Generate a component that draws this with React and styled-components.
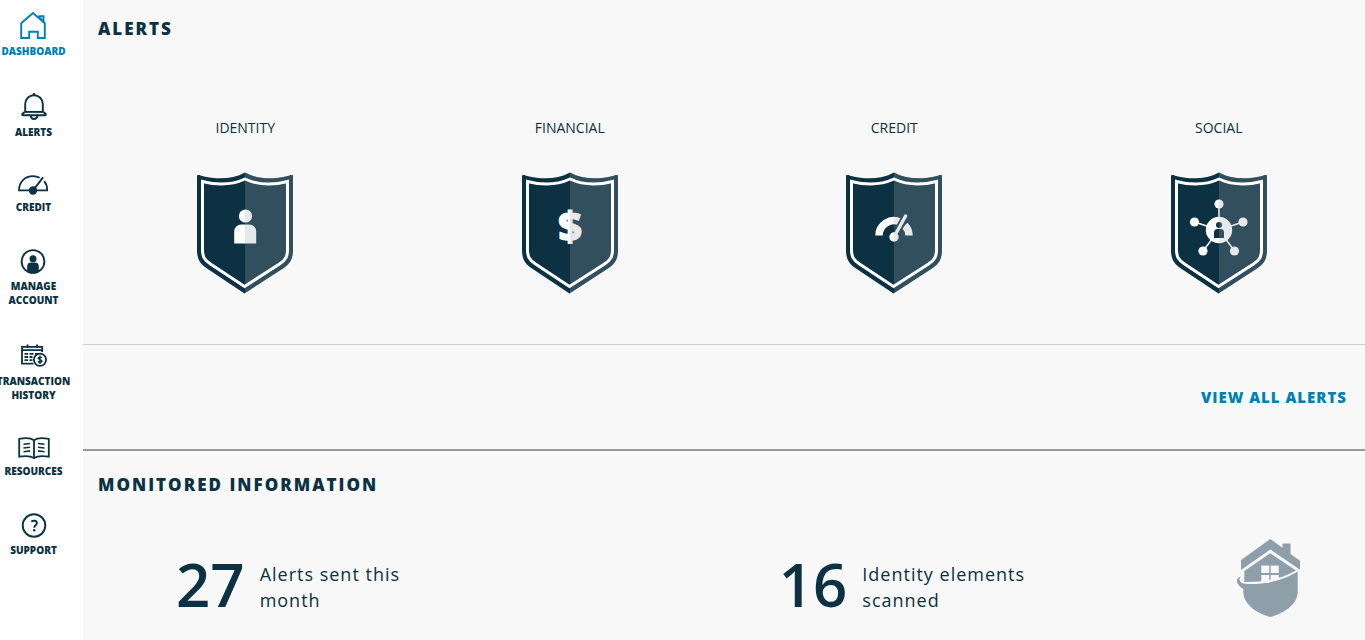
import React from "react";
import styled, { createGlobalStyle, css } from "styled-components";

const navy = "#0b3142";
const blue = "#007fb5";

const GlobalStyle = createGlobalStyle`
  * {
    box-sizing: border-box;
  }

  body {
    margin: 0;
    background-color: #f8f8f8;
    color: ${navy};
    font-family: "Open Sans", sans-serif;
  }
`;

const heavyText = css`
  font-weight: 800;
  text-transform: uppercase;
`;

const Page = styled.div`
  display: flex;
  min-height: 100vh;
  overflow: hidden;
`;

const Sidebar = styled.nav`
  flex: 0 0 83px;
  min-width: 0;
  padding: 11px 16px 0 0;
  background-color: #fff;
`;

const NavList = styled.ul`
  display: flex;
  flex-direction: column;
  gap: 35px;
  margin: 0;
  padding: 0;
  list-style: none;
`;

const NavItem = styled.li`
  display: flex;
  justify-content: center;
`;

const NavLink = styled.a`
  ${heavyText}
  display: flex;
  flex: none;
  flex-direction: column;
  align-items: center;
  gap: 5px;
  width: min-content;
  color: ${(props) => (props.$active ? blue : navy)};
  font-size: 10px;
  line-height: 14px;
  text-align: center;
  text-decoration: none;

  svg {
    display: block;
    flex: none;
  }
`;

const Main = styled.main`
  flex: 1;
  min-width: 0;
`;

const SectionTitle = styled.h2`
  ${heavyText}
  margin: 0;
  padding: 0 15px;
  font-size: 17px;
  line-height: 24px;
  letter-spacing: 2px;
`;

const AlertsSection = styled.section`
  padding-top: 17px;
  border-bottom: 2px solid #999;
`;

const CategoryRow = styled.div`
  display: grid;
  grid-template-columns: repeat(4, 1fr);
  margin-right: -16px;
  padding: 77px 0 50px;
`;

const Category = styled.a`
  display: flex;
  flex-direction: column;
  align-items: center;
  gap: 34px;
  color: ${navy};
  font-size: 14px;
  line-height: 20px;
  text-decoration: none;
  text-transform: uppercase;
`;

const AlertsFooter = styled.div`
  display: flex;
  align-items: center;
  justify-content: flex-end;
  height: 105px;
  padding-right: 18px;
  border-top: 1px solid #c9cfd1;
`;

const ViewAll = styled.a`
  ${heavyText}
  color: ${blue};
  font-size: 15px;
  line-height: 24px;
  letter-spacing: 1px;
  text-decoration: none;
`;

const MonitoredSection = styled.section`
  padding-top: 22px;
`;

const StatRow = styled.div`
  display: grid;
  grid-template-columns: 15fr 11fr 2fr;
  padding: 42px 64px 0 93px;
`;

const Stat = styled.div`
  display: flex;
  align-items: center;
  gap: 15px;
  padding-top: 18px;
`;

const StatNumber = styled.strong`
  padding-bottom: 6px;
  font-size: 60px;
  font-weight: 600;
  line-height: 54px;
`;

const StatLabel = styled.span`
  width: 170px;
  font-size: 18px;
  line-height: 26px;
  letter-spacing: 1px;
`;

const LogoBox = styled.div`
  justify-self: end;

  svg {
    display: block;
  }
`;

const HomeIcon = () => (
  <svg width="26" height="28" viewBox="0 0 26 28" fill="none" stroke="currentColor" strokeWidth="1.9" aria-hidden="true">
    <path d="M1.200 27V12.200L13 2l11.800 10.300V27h-7v-6.200H9.200V27Z" />
    <path d="M18.500 5.200h5v6" />
    <path d="M18.500 5.200l5 5" strokeWidth="1.200" />
  </svg>
);

const BellIcon = () => (
  <svg width="26" height="27" viewBox="0 0 26 27" fill="none" stroke="currentColor" strokeWidth="1.9" aria-hidden="true">
    <path d="M4.200 18.500V11a8.800 8.800 0 0 1 17.600 0v7.500l2.700 2.200a.9.9 0 0 1-.6 1.600H2.100a.9.9 0 0 1-.6-1.600Z" />
    <path d="M4.200 18.900h17.600" />
    <path d="M9.600 22.600a3.400 3.400 0 0 0 6.800 0" />
    <circle cx="13" cy="1.500" r="1.400" fill="currentColor" stroke="none" />
  </svg>
);

const GaugeIcon = () => (
  <svg width="32" height="21" viewBox="0 0 32 21" fill="none" stroke="currentColor" strokeWidth="1.8" aria-hidden="true">
    <path d="M15 16.300H2C2 8 8 2.200 16 2.200c2.600 0 4.700.6 6.700 1.600" />
    <path d="M27.200 7.200c2 2.400 3 5.400 3 9.100H17" />
    <path d="M16 16.500 26 3.300" strokeWidth="2" />
    <circle cx="16" cy="16.500" r="4.200" fill="currentColor" stroke="none" />
  </svg>
);

const AccountIcon = () => (
  <svg width="26" height="25" viewBox="0 0 26 25" aria-hidden="true">
    <circle cx="13" cy="12.500" r="11.400" fill="none" stroke="currentColor" strokeWidth="1.900" />
    <circle cx="13" cy="9.700" r="3.500" fill="currentColor" />
    <path d="M7.200 22.800v-5.200a4 4 0 0 1 4-4h3.600a4 4 0 0 1 4 4v5.200a12 12 0 0 1-11.600 0Z" fill="currentColor" />
  </svg>
);

const TransactionIcon = () => (
  <svg width="26" height="27" viewBox="0 0 26 27" fill="none" stroke="currentColor" strokeWidth="1.800" aria-hidden="true">
    <path d="M21.200 10V4.800H1V21.700h11.500" />
    <path d="M1 8.200h20.200M6.500 2.500v3.500M16 2.500v3.500" />
    <path d="M3.500 11.800h3.500M8.500 11.800h4M14 11.800h3M3.500 15h3.500M8.500 15h3M3.500 18.200h3.500M8.500 18.200h3" />
    <circle cx="19" cy="17.700" r="6.100" />
    <path d="M21 15.700c-.5-.8-3.800-1-3.800.5s3.800 1.200 3.800 2.800-3.400 1.500-4 .4M19 13.400v8.500" strokeWidth="1.400" />
  </svg>
);

const BookIcon = () => (
  <svg width="32" height="22" viewBox="0 0 32 22" fill="none" stroke="currentColor" strokeWidth="1.800" aria-hidden="true">
    <path d="M16 3.200C12.500.6 8.500.5 1.200 1.900v17.700c7-1 11.400-.8 14.800 1.400 3.400-2.200 7.800-2.400 14.800-1.400V1.900C23.500.5 19.500.6 16 3.200Z" />
    <path d="M16 3v18.500" />
    <path d="M5.500 7.300l6.500-.8M5.500 11l6.500-.8M5.500 14.700l6.500-.8M20 6.500l6.500.8M20 10.200l6.500.8M20 13.900l6.500.8" strokeWidth="1.600" />
  </svg>
);

const SupportIcon = () => (
  <svg width="26" height="25" viewBox="0 0 26 25" fill="none" stroke="currentColor" aria-hidden="true">
    <circle cx="13" cy="12.500" r="11.300" strokeWidth="1.900" />
    <path d="M10.300 8.600c2-1.400 5.600-1.200 5.600 1.400 0 2.200-2.700 2.300-2.700 4.800" strokeWidth="1.900" />
    <circle cx="13.200" cy="17.300" r="1.200" fill="currentColor" stroke="none" />
  </svg>
);

const IdentityMark = () => (
  <>
    <circle cx="48.500" cy="44" r="6.600" />
    <path d="M37.200 71.500V59.500a7 7 0 0 1 7-7h8a7 7 0 0 1 7 7v12Z" />
  </>
);

const FinancialMark = () => (
  <text
    x="48"
    y="69"
    textAnchor="middle"
    fontSize="41"
    fontWeight="800"
    fontFamily="Open Sans, sans-serif"
    stroke="#fff"
    strokeWidth="1"
  >
    $
  </text>
);

const CreditMark = () => (
  <>
    <path d="M33 63.500a15 15 0 0 1 21-13.600M58.800 53.300A15 15 0 0 1 63 63.500" fill="none" stroke="#fff" strokeWidth="7.500" />
    <path d="M48 65 59.800 44" stroke={navy} strokeWidth="7" />
    <path d="M48 65 59.600 44" stroke="#fff" strokeWidth="3.400" strokeLinecap="round" />
    <circle cx="48" cy="65" r="4.700" />
  </>
);

const nodes = [
  [48, 32],
  [23.5, 50],
  [72, 50],
  [32, 79],
  [63.5, 79],
];

const SocialMark = () => (
  <>
    {nodes.map(([x, y]) => (
      <g key={`${x}-${y}`}>
        <path d={`M48 58 ${x} ${y}`} stroke="#fff" strokeWidth="1.500" />
        <circle cx={x} cy={y} r="4.600" />
      </g>
    ))}
    <circle cx="48" cy="58" r="13.200" />
    <circle cx="48" cy="53" r="3" fill={navy} />
    <path d="M43 66v-5.500a3.500 3.500 0 0 1 3.500-3.500h3a3.500 3.500 0 0 1 3.500 3.500V66Z" fill={navy} />
  </>
);

// The right half of the shield is tinted over both the body and the mark
const Shield = ({ id, children }) => {
  const outline =
    "M0 3.500C2 2.500 3 3.500 5 4 20 7.500 35 7.500 48 .5 61 7.500 76 7.500 91 4 93 3.500 94 2.500 96 3.500V78C96 87 93 92 86 96.500L47.500 121.500 10 96.500C3 92 0 87 0 78Z";
  return (
    <svg width="96" height="122" viewBox="0 0 96 122" aria-hidden="true">
      <clipPath id={id}>
        <path d={outline} />
      </clipPath>
      <path d={outline} fill={navy} />
      <g fill="#fff">{children}</g>
      <rect x="48" width="48" height="122" fill="#9da5aa" opacity="0.26" clipPath={`url(#${id})`} />
      <path
        d="M5.500 9.500C21 13.500 35 13 48 7 61 13 75 13.500 90.500 9.500V78C90.500 84.500 88.500 88 82.500 92L47.500 114.500 13.500 92C7.500 88 5.500 84.500 5.500 78Z"
        fill="none"
        stroke="#fff"
        strokeWidth="3"
      />
    </svg>
  );
};

const HomeShieldLogo = () => (
  <svg width="65" height="78" viewBox="0 0 65 78" fill="#8f9faa" role="img" aria-label="Home protection">
    <path d="M5 21 34.300 0 46.500 8.800V4.500h8V15L64 21.700v9L34.300 10.500 5 31Z" />
    <path d="M8.300 32 34.300 14.300 60 31.500C46 39.500 30 43 8.300 43Z" />
    <path d="M61.700 32.500C50 40 32 45.500 12 45 5 45 1.500 42.500 4.700 37.500-.5 39.500-1 44.500 7.300 50V54C8 65 20 74 34.300 78 49 74 61 65 61.700 54Z" />
    <path d="M25.300 26.500h8V34h-8ZM34.700 26.500h8V34h-8ZM25.300 36h8v8h-8ZM34.700 36h8v4l-8 2.800Z" fill="#f8f8f8" />
  </svg>
);

const navItems = [
  { label: "Dashboard", icon: HomeIcon, active: true },
  { label: "Alerts", icon: BellIcon },
  { label: "Credit", icon: GaugeIcon },
  { label: "Manage Account", icon: AccountIcon },
  { label: "Transaction History", icon: TransactionIcon },
  { label: "Resources", icon: BookIcon },
  { label: "Support", icon: SupportIcon },
];

const categories = [
  { label: "Identity", mark: IdentityMark },
  { label: "Financial", mark: FinancialMark },
  { label: "Credit", mark: CreditMark },
  { label: "Social", mark: SocialMark },
];

const stats = [
  { value: 27, label: "Alerts sent this month" },
  { value: 16, label: "Identity elements scanned" },
];

const App = () => {
  return (
    <>
      <GlobalStyle />
      <Page>
        <Sidebar>
          <NavList>
            {navItems.map(({ label, icon: Icon, active }) => (
              <NavItem key={label}>
                <NavLink href="#" $active={active}>
                  <Icon />
                  {label}
                </NavLink>
              </NavItem>
            ))}
          </NavList>
        </Sidebar>
        <Main>
          <AlertsSection>
            <SectionTitle>Alerts</SectionTitle>
            <CategoryRow>
              {categories.map(({ label, mark: Mark }) => (
                <Category key={label} href="#">
                  {label}
                  <Shield id={`shield-${label}`}>
                    <Mark />
                  </Shield>
                </Category>
              ))}
            </CategoryRow>
            <AlertsFooter>
              <ViewAll href="#">View all alerts</ViewAll>
            </AlertsFooter>
          </AlertsSection>
          <MonitoredSection>
            <SectionTitle>Monitored Information</SectionTitle>
            <StatRow>
              {stats.map((stat) => (
                <Stat key={stat.label}>
                  <StatNumber>{stat.value}</StatNumber>
                  <StatLabel>{stat.label}</StatLabel>
                </Stat>
              ))}
              <LogoBox>
                <HomeShieldLogo />
              </LogoBox>
            </StatRow>
          </MonitoredSection>
        </Main>
      </Page>
    </>
  );
};

export default App;
